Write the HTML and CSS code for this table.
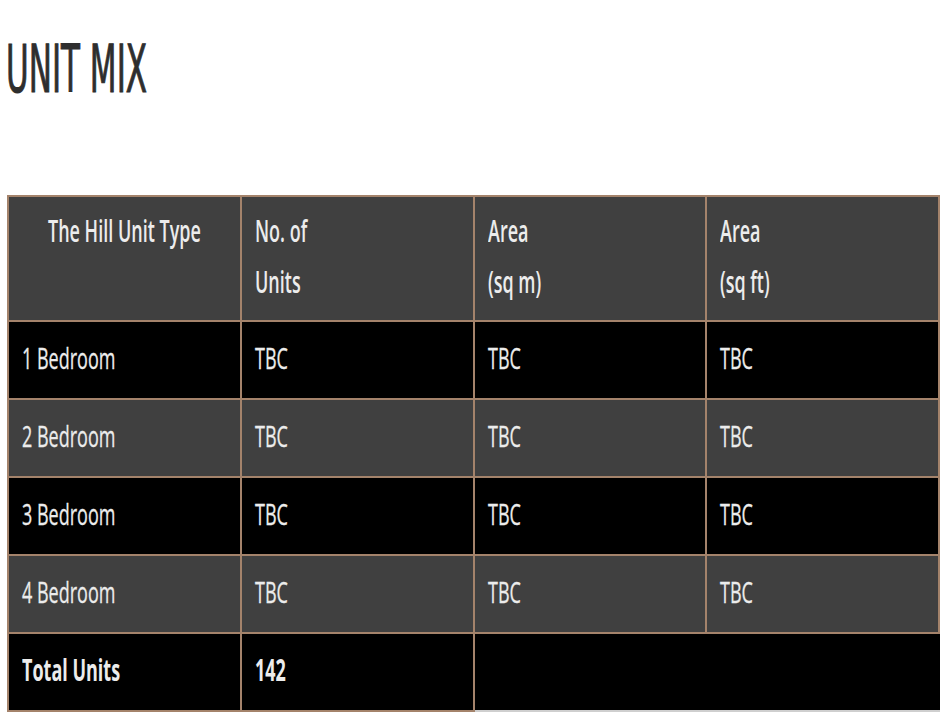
FILE: index.html
```html
<!DOCTYPE html>
<html lang="en">
<head>
<meta charset="utf-8">
<title>Unit Mix</title>
<link rel="stylesheet" href="styles.css">
</head>
<body>
<main class="page">
  <h1 class="title"><span class="title-text">UNIT MIX</span></h1>
  <table class="mix">
    <colgroup><col><col><col><col></colgroup>
    <thead>
      <tr class="head">
        <th class="center"><div class="center-wrap"><span class="t t-center">The Hill Unit Type</span></div></th>
        <th><span class="t">No. of<br>Units</span></th>
        <th><span class="t">Area<br>(sq m)</span></th>
        <th><span class="t">Area<br>(sq ft)</span></th>
      </tr>
    </thead>
    <tbody>
      <tr class="dark">
        <td><span class="t">1 Bedroom</span></td>
        <td><span class="t">TBC</span></td>
        <td><span class="t">TBC</span></td>
        <td><span class="t">TBC</span></td>
      </tr>
      <tr class="grey">
        <td><span class="t">2 Bedroom</span></td>
        <td><span class="t">TBC</span></td>
        <td><span class="t">TBC</span></td>
        <td><span class="t">TBC</span></td>
      </tr>
      <tr class="dark">
        <td><span class="t">3 Bedroom</span></td>
        <td><span class="t">TBC</span></td>
        <td><span class="t">TBC</span></td>
        <td><span class="t">TBC</span></td>
      </tr>
      <tr class="grey">
        <td><span class="t">4 Bedroom</span></td>
        <td><span class="t">TBC</span></td>
        <td><span class="t">TBC</span></td>
        <td><span class="t">TBC</span></td>
      </tr>
      <tr class="dark total">
        <td><span class="t">Total Units</span></td>
        <td><span class="t">142</span></td>
        <td class="blank" colspan="2"></td>
      </tr>
    </tbody>
  </table>
</main>
</body>
</html>
```

FILE: styles.css
```css
html, body {
  margin: 0;
  padding: 0;
  background: #ffffff;
}

.page {
  padding: 30px 3px 0 7px;
}

.title {
  margin: 0 0 85px -1px;
  font-family: "DejaVu Sans", sans-serif;
  font-weight: 400;
  font-size: 66px;
  line-height: 80px;
  color: #2e2e2e;
  height: 80px;
}

.title-text {
  display: inline-block;
  transform: scaleX(0.47);
  transform-origin: left center;
  white-space: nowrap;
  -webkit-text-stroke: 1.2px #2e2e2e;
}

.mix {
  width: 933px;
  border-collapse: collapse;
  table-layout: fixed;
  font-family: "Open Sans", "Noto Sans", sans-serif;
  font-size: 30px;
  color: #ececec;
  border: 2px solid #a4836b;
}

.mix col {
  width: 25%;
}

.mix th,
.mix td {
  border: 2px solid #a4836b;
  padding: 0 0 0 13px;
  text-align: left;
  overflow: hidden;
}

.mix th {
  height: 115px;
  vertical-align: top;
  padding-top: 8px;
  font-weight: 600;
  line-height: 51px;
  background: #404040;
}

.mix th.center {
  padding-left: 0;
}

.center-wrap {
  display: flex;
  justify-content: center;
}

.mix td {
  height: 71px;
  vertical-align: middle;
  padding-bottom: 5px;
  line-height: 40px;
  font-weight: 400;
  -webkit-text-stroke: 0.3px #ececec;
}

.dark td {
  background: #000000;
}

.grey td {
  background: #404040;
}

.total td {
  font-weight: 700;
  -webkit-text-stroke: 0;
}

.mix td.blank {
  border-right-color: #000000;
  border-bottom-color: #cfcfcf;
}

.t {
  display: inline-block;
  white-space: nowrap;
  transform: scaleX(0.6);
  transform-origin: left center;
}

.t-center {
  flex: none;
  transform-origin: center center;
}
```
